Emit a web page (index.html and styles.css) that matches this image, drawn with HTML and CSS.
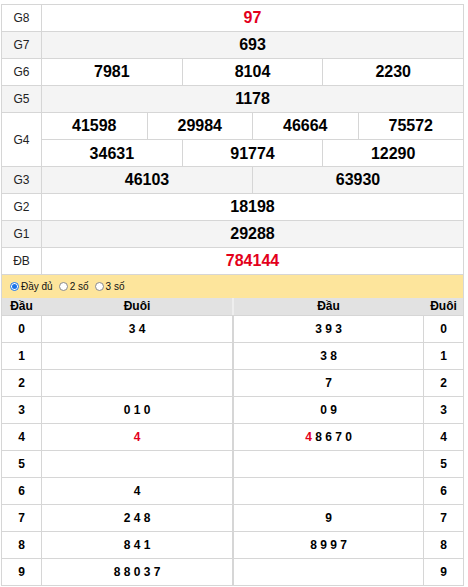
FILE: index.html
```html
<!DOCTYPE html>
<html lang="vi">
<head>
<meta charset="utf-8">
<title>Kết quả xổ số</title>
<link rel="stylesheet" href="styles.css">
</head>
<body>
<div class="wrap">
  <div class="kq">
    <div class="row"><div class="lbl">G8</div><div class="vals"><span class="red">97</span></div></div>
    <div class="row alt"><div class="lbl">G7</div><div class="vals"><span>693</span></div></div>
    <div class="row"><div class="lbl">G6</div><div class="vals"><span>7981</span><span>8104</span><span>2230</span></div></div>
    <div class="row alt"><div class="lbl">G5</div><div class="vals"><span>1178</span></div></div>
    <div class="row tall"><div class="lbl">G4</div>
      <div class="stack">
        <div class="vals sub"><span>41598</span><span>29984</span><span>46664</span><span>75572</span></div>
        <div class="vals"><span>34631</span><span>91774</span><span>12290</span></div>
      </div>
    </div>
    <div class="row alt"><div class="lbl">G3</div><div class="vals"><span>46103</span><span>63930</span></div></div>
    <div class="row"><div class="lbl">G2</div><div class="vals"><span>18198</span></div></div>
    <div class="row alt"><div class="lbl">G1</div><div class="vals"><span>29288</span></div></div>
    <div class="row"><div class="lbl">ĐB</div><div class="vals"><span class="red">784144</span></div></div>
  </div>
  <div class="opts">
    <label class="opt"><span class="radio on"></span>Đầy đủ</label>
    <label class="opt"><span class="radio"></span>2 số</label>
    <label class="opt"><span class="radio"></span>3 số</label>
  </div>
  <div class="loto">
    <div class="lr head"><div class="c1">Đầu</div><div class="c2">Đuôi</div><div class="c3">Đầu</div><div class="c4">Đuôi</div></div>
    <div class="lr"><div class="c1">0</div><div class="c2">3 4</div><div class="c3">3 9 3</div><div class="c4">0</div></div>
    <div class="lr"><div class="c1">1</div><div class="c2"></div><div class="c3">3 8</div><div class="c4">1</div></div>
    <div class="lr"><div class="c1">2</div><div class="c2"></div><div class="c3">7</div><div class="c4">2</div></div>
    <div class="lr"><div class="c1">3</div><div class="c2">0 1 0</div><div class="c3">0 9</div><div class="c4">3</div></div>
    <div class="lr"><div class="c1">4</div><div class="c2"><span class="red">4</span></div><div class="c3"><span><span class="red">4</span> 8 6 7 0</span></div><div class="c4">4</div></div>
    <div class="lr"><div class="c1">5</div><div class="c2"></div><div class="c3"></div><div class="c4">5</div></div>
    <div class="lr"><div class="c1">6</div><div class="c2">4</div><div class="c3"></div><div class="c4">6</div></div>
    <div class="lr"><div class="c1">7</div><div class="c2">2 4 8</div><div class="c3">9</div><div class="c4">7</div></div>
    <div class="lr"><div class="c1">8</div><div class="c2">8 4 1</div><div class="c3">8 9 9 7</div><div class="c4">8</div></div>
    <div class="lr"><div class="c1">9</div><div class="c2">8 8 0 3 7</div><div class="c3"></div><div class="c4">9</div></div>
  </div>
</div>
</body>
</html>
```

FILE: styles.css
```css
* { box-sizing: border-box; }
html, body { margin: 0; padding: 0; background: #fff; }
body { font-family: "Liberation Sans", Arial, sans-serif; color: #000; }
.wrap { width: 463px; margin: 4px 0 0 1px; }

.kq { border: 1px solid #d6d6d6; border-bottom: none; }
.row { display: flex; height: 27px; border-bottom: 1px solid #d6d6d6; background: #fff; }
.row.alt { background: #f4f4f4; }
.row.tall { height: 54px; }
.lbl { width: 40px; flex: none; border-right: 1px solid #d6d6d6; display: flex; align-items: center; justify-content: center; font-size: 12px; color: #222; }
.vals { flex: 1; display: flex; }
.vals span { flex: 1 1 0; display: flex; align-items: center; justify-content: center; font-size: 16px; font-weight: bold; }
.vals span + span { border-left: 1px solid #d6d6d6; }
.stack { flex: 1; display: flex; flex-direction: column; }
.stack .vals { height: 27px; flex: none; }
.stack .vals.sub { border-bottom: 1px solid #d6d6d6; }
.red { color: #e3001b; }

.opts { height: 23px; background: #fde59c; display: flex; align-items: center; padding-left: 8px; gap: 6px; font-size: 10px; color: #111; border-left: 1px solid #d6d6d6; border-right: 1px solid #d6d6d6; }
.opt { display: flex; align-items: center; gap: 2px; }
.radio { width: 9px; height: 9px; border-radius: 50%; border: 1px solid #8a8a8a; background: #fff; display: inline-block; position: relative; }
.radio.on { border-color: #1a73e8; }
.radio.on::after { content: ""; position: absolute; left: 1px; top: 1px; width: 5px; height: 5px; border-radius: 50%; background: #1a73e8; }

.loto { border: 1px solid #d6d6d6; border-top: none; }
.lr { display: grid; grid-template-columns: 40px 192px 190px 39px; height: 27px; border-top: 1px solid #d6d6d6; font-size: 12px; font-weight: bold; }
.lr > div { display: flex; align-items: center; justify-content: center; }
.lr .c1 { border-right: 1px solid #d6d6d6; }
.lr .c2 { border-right: 2px solid #d6d6d6; }
.lr .c3 { border-right: 1px solid #d6d6d6; }
.lr.head { height: 17px; background: #e2e2e2; border-top: none; }
.lr.head .c1, .lr.head .c3 { border-right-color: transparent; }
.lr.head .c2 { border-right-color: #eeeeee; }
.lr.head > div { align-items: flex-start; padding-top: 1px; }
```
